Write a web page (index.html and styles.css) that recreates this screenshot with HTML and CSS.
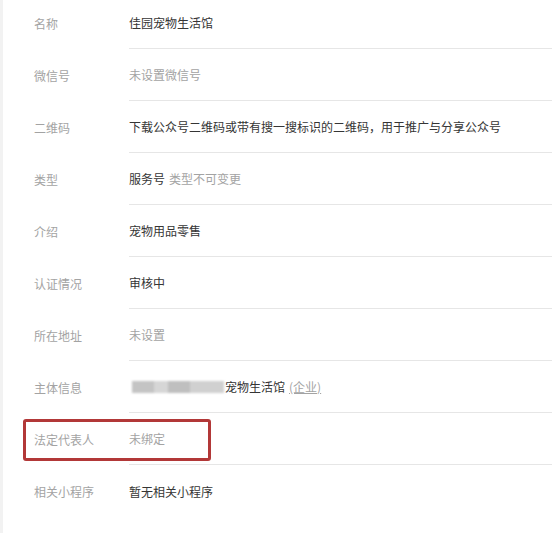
FILE: index.html
```html
<!DOCTYPE html>
<html lang="zh-CN">
<head>
<meta charset="UTF-8">
<title>公众号设置</title>
<link rel="stylesheet" href="styles.css">
</head>
<body>
<div class="page">
    <ul class="info-list">
        <li class="row">
            <span class="label">名称</span>
            <div class="value">佳园宠物生活馆</div>
        </li>
        <li class="row">
            <span class="label">微信号</span>
            <div class="value muted">未设置微信号</div>
        </li>
        <li class="row">
            <span class="label">二维码</span>
            <div class="value">下载公众号二维码或带有搜一搜标识的二维码，用于推广与分享公众号</div>
        </li>
        <li class="row">
            <span class="label">类型</span>
            <div class="value">服务号 <span class="muted">类型不可变更</span></div>
        </li>
        <li class="row">
            <span class="label">介绍</span>
            <div class="value">宠物用品零售</div>
        </li>
        <li class="row">
            <span class="label">认证情况</span>
            <div class="value">审核中</div>
        </li>
        <li class="row">
            <span class="label">所在地址</span>
            <div class="value muted">未设置</div>
        </li>
        <li class="row">
            <span class="label">主体信息</span>
            <div class="value">
                <span class="blur">
                    <i class="b1"></i><i class="b2"></i><i class="b3"></i><i class="b4"></i>
                </span>宠物生活馆 <a class="link" href="#">(企业)</a>
            </div>
        </li>
        <li class="row marked">
            <span class="label">法定代表人</span>
            <div class="value muted">未绑定</div>
            <span class="highlight"></span>
        </li>
        <li class="row">
            <span class="label">相关小程序</span>
            <div class="value">暂无相关小程序</div>
        </li>
    </ul>
</div>
</body>
</html>
```

FILE: styles.css
```css
* {
    margin: 0;
    padding: 0;
    box-sizing: border-box;
}

body {
    background: #fff;
    font-family: "Noto Sans CJK SC", "Noto Sans", sans-serif;
    font-size: 12px;
    color: #353535;
    overflow: hidden;
}

.page {
    display: flow-root;
    height: 533px;
    overflow: hidden;
    border-left: 3px solid #f2f2f2;
}

.info-list {
    list-style: none;
    margin-top: -3px;
}

/* 每一行：左边标签，右边内容，分隔线只在内容列 */
.row {
    position: relative;
    display: flex;
    align-items: center;
    height: 52px;
}

.label {
    width: 126px;
    padding-left: 31px;
    flex-shrink: 0;
    color: #a3a3a3;
}

.value {
    flex: 1;
    height: 100%;
    display: flex;
    align-items: center;
    border-bottom: 1px solid #e6e6e6;
}

.row:last-child .value {
    border-bottom: none;
}

.muted {
    color: #a3a3a3;
}

.value .muted {
    margin-left: 4px;
}

.link {
    color: #a3a3a3;
    margin-left: 4px;
    text-decoration: underline;
}

/* 打码区域 */
.blur {
    display: inline-flex;
    margin-left: 3px;
    margin-right: 1px;
    height: 12px;
    filter: blur(1px);
}

.blur i {
    display: block;
    height: 12px;
}

.b1 { width: 22px; background: #c4c4c4; }
.b2 { width: 14px; background: #d6d6d6; }
.b3 { width: 22px; background: #bfbfbf; }
.b4 { width: 34px; background: #d0d0d0; }

/* 红框标注 */
.highlight {
    position: absolute;
    left: 20px;
    top: 6px;
    width: 188px;
    height: 42px;
    border: 3px solid #b23838;
    border-radius: 3px;
}
```
